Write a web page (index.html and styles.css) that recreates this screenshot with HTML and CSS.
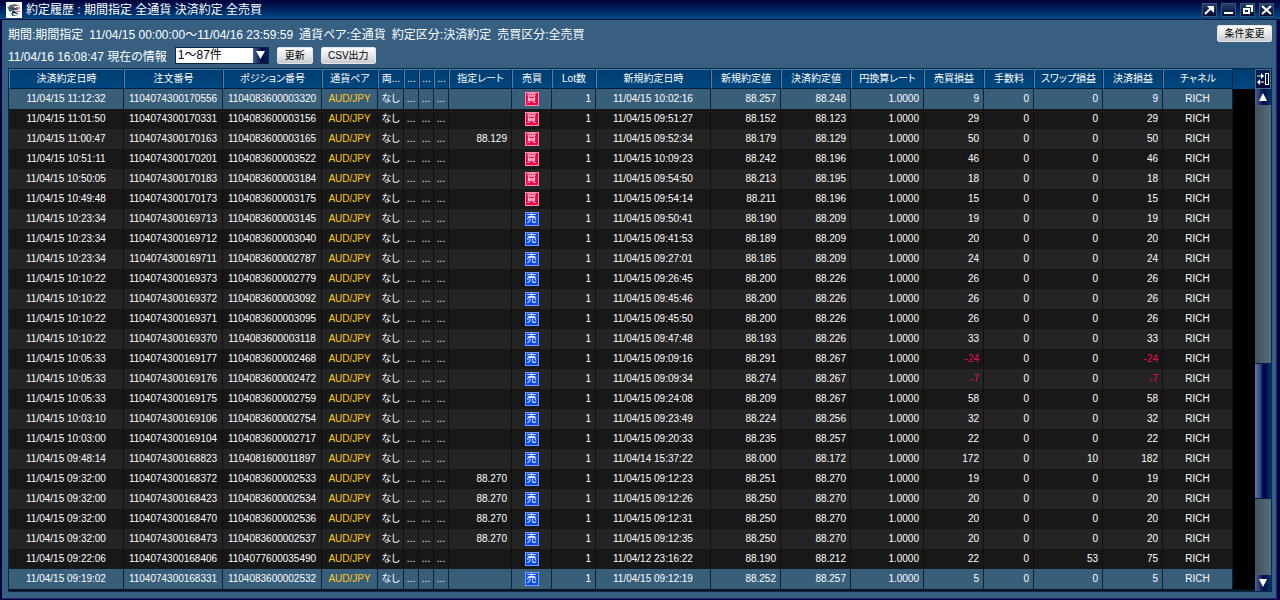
FILE: index.html
```html
<!DOCTYPE html>
<html lang="ja">
<head>
    <meta charset="UTF-8">
    <meta name="viewport" content="width=device-width, initial-scale=1.0">
    <title>約定履歴</title>
    <link rel="stylesheet" href="styles.css">
</head>
<body>
    <div class="window">
        <header class="title-bar">
            <svg class="logo" viewBox="0 0 16 16" aria-hidden="true">
                <rect width="16" height="16" fill="#fff"/>
                <path d="M1 6 L4 3 L9 2 L14 4 L9 4 L6 6 L3 7 Z" fill="#5c6a78"/>
                <path d="M2 7 L7 5 L10 6 L14 7 L10 8 L7 8 L4 10 Z" fill="#3a4658"/>
                <path d="M7 8 L9 9 L13 13 L8 11 L6 14 L6 10 Z" fill="#26303e"/>
                <path d="M5 10 L8 13 L12 14 L6 14 Z" fill="#2c7b91"/>
                <path d="M10 5.5 L14 6 M10 9 L14 10" stroke="#d5455a" fill="none"/>
                <path d="M3 8 L6 7" stroke="#2c9b91" fill="none"/>
            </svg>
            <h1>約定履歴 : 期間指定 全通貨 決済約定 全売買</h1>
            <div class="window-buttons">
                <button type="button" class="window-btn" aria-label="切り離し">
                    <svg viewBox="0 0 13 12"><path d="M2 10 L8 4" stroke="#fff" stroke-width="2" fill="none"/><path d="M4 2 H11 V9 Z" fill="#fff"/></svg>
                </button>
                <button type="button" class="window-btn" aria-label="最小化">
                    <svg viewBox="0 0 13 12"><path d="M2 9 H11" stroke="#fff" stroke-width="2"/></svg>
                </button>
                <button type="button" class="window-btn" aria-label="元に戻す">
                    <svg viewBox="0 0 13 12"><path d="M5 2 H11 V8" stroke="#fff" stroke-width="2" fill="none"/><rect x="3" y="5" width="5" height="4" stroke="#fff" stroke-width="2" fill="none"/></svg>
                </button>
                <button type="button" class="window-btn" aria-label="閉じる">
                    <svg viewBox="0 0 13 12"><path d="M2 2 L11 10 M11 2 L2 10" stroke="#fff" stroke-width="2"/></svg>
                </button>
            </div>
        </header>

        <main class="content">
            <div class="conditions">
                <span>期間:期間指定</span>
                <span>11/04/15 00:00:00～11/04/16 23:59:59</span>
                <span>通貨ペア:全通貨</span>
                <span>約定区分:決済約定</span>
                <span>売買区分:全売買</span>
                <button type="button" class="btn change-btn">条件変更</button>
            </div>
            <div class="toolbar">
                <label for="pageRange">11/04/16 16:08:47 現在の情報</label>
                <div class="select-box">
                    <select id="pageRange">
                        <option>1～87件</option>
                    </select>
                    <span class="select-arrow"><svg viewBox="0 0 9 8"><path d="M0 0 H9 L4.5 8 Z" fill="#fff"/></svg></span>
                </div>
                <button type="button" class="btn">更新</button>
                <button type="button" class="btn csv-btn">CSV出力</button>
            </div>

            <div class="history">
                <div class="table-area">
                    <table>
                        <colgroup>
                            <col class="w-date"><col class="w-id"><col class="w-id"><col class="w-pair"><col class="w-both">
                            <col class="w-dots"><col class="w-dots"><col class="w-dots"><col class="w-limit"><col class="w-side">
                            <col class="w-lot"><col class="w-date"><col class="w-price"><col class="w-price"><col class="w-yen">
                            <col class="w-profit"><col class="w-fee"><col class="w-swap"><col class="w-profit"><col class="w-price"><col>
                        </colgroup>
                        <thead>
                            <tr>
                                <th>決済約定日時</th>
                                <th>注文番号</th>
                                <th>ポジション番号</th>
                                <th>通貨ペア</th>
                                <th class="tight">両...</th>
                                <th class="tight">...</th>
                                <th class="tight">...</th>
                                <th class="tight">...</th>
                                <th>指定レート</th>
                                <th>売買</th>
                                <th>Lot数</th>
                                <th>新規約定日時</th>
                                <th>新規約定値</th>
                                <th>決済約定値</th>
                                <th>円換算レート</th>
                                <th>売買損益</th>
                                <th>手数料</th>
                                <th>スワップ損益</th>
                                <th>決済損益</th>
                                <th>チャネル</th>
                                <td class="rest"></td>
                            </tr>
                        </thead>
                        <tbody id="historyRows"></tbody>
                    </table>
                </div>
                <div class="side">
                    <button type="button" class="columns-btn" aria-label="列の設定">
                        <svg viewBox="0 0 14 18"><path d="M1 6 H6 M3 12 H8" stroke="#fff"/><path d="M5 3 L8 6 L5 9 Z M4 9 L1 12 L4 15 Z" fill="#fff"/><rect x="9.5" y="3.5" width="3" height="11" stroke="#fff" fill="none"/></svg>
                    </button>
                    <div class="scrollbar">
                        <button type="button" class="scroll-btn" aria-label="上へ"><svg viewBox="0 0 8 8"><path d="M4 0 L8 8 H0 Z" fill="#fff"/></svg></button>
                        <div class="track">
                            <div class="track-before"></div>
                            <div class="thumb"></div>
                            <div class="track-after"></div>
                        </div>
                        <button type="button" class="scroll-btn" aria-label="下へ"><svg viewBox="0 0 8 8"><path d="M0 0 H8 L4 8 Z" fill="#fff"/></svg></button>
                    </div>
                </div>
            </div>
        </main>
    </div>
    <script src="script.js"></script>
</body>
</html>
```
FILE: styles.css
```css
* {
    box-sizing: border-box;
}
body {
    margin: 0;
    background-color: #00003c;
    color: #fff;
    font-family: "Liberation Sans", "Noto Sans CJK JP", sans-serif;
    font-size: 12px;
}
button, select {
    font-family: inherit;
    margin: 0;
}
svg {
    display: block;
}
.window {
    display: flex;
    flex-direction: column;
    min-height: 100vh;
}
.title-bar {
    display: flex;
    align-items: center;
    gap: 4px;
    height: 20px;
    padding: 0 6px;
    background: linear-gradient(#000038, #00205c 45%, #004a84);
    border-bottom: 1px solid #00123c;
}
.title-bar h1 {
    flex: 1;
    margin: 0;
    font-size: 12px;
    font-weight: normal;
    line-height: 18px;
    font-feature-settings: "palt";
}
.logo {
    width: 16px;
    height: 16px;
}
.window-buttons {
    display: flex;
    gap: 4px;
}
.window-btn {
    width: 15px;
    height: 14px;
    padding: 0;
    border: 1px solid #3c5274;
    background: linear-gradient(#26406c, #000a30);
}
.content {
    display: flex;
    flex: 1;
    flex-direction: column;
    margin: 0 3px 1px 2px;
    padding: 4px 4px 6px 6px;
    border: solid #24247a;
    border-width: 0 1px 1px 0;
    background-color: #365f82;
}
.conditions {
    display: flex;
    align-items: center;
    gap: 6px;
    height: 19px;
    font-feature-settings: "palt";
}
.toolbar {
    display: flex;
    align-items: center;
    gap: 8px;
    height: 24px;
    margin-bottom: 1px;
    font-feature-settings: "palt";
}
.btn {
    min-width: 36px;
    height: 17px;
    padding: 0 6px;
    border: 1px solid #e4e6ea;
    border-radius: 2px;
    background: linear-gradient(#fff, #e8e8e8 50%, #c8ccd0);
    color: #000;
    font-size: 10px;
    line-height: 15px;
    white-space: nowrap;
}
.csv-btn, .change-btn {
    min-width: 55px;
}
.change-btn {
    margin-left: auto;
}
.select-box {
    position: relative;
    width: 94px;
    height: 17px;
}
.select-box select {
    display: block;
    width: 100%;
    height: 17px;
    padding: 0 18px 0 2px;
    border: 1px solid #0a2444;
    border-radius: 0;
    background-color: #fff;
    color: #000;
    font-size: 12px;
    line-height: 15px;
    appearance: none;
}
.select-arrow {
    position: absolute;
    top: 1px;
    right: 1px;
    display: flex;
    align-items: center;
    justify-content: center;
    width: 15px;
    height: 15px;
    background: linear-gradient(90deg, #4a6090, #001048 60%, #00205c);
    pointer-events: none;
}
.select-arrow svg {
    width: 9px;
    height: 8px;
}
.history {
    display: flex;
    flex: 1;
    border: 1px solid #062a4c;
}
.table-area {
    flex: 1;
    min-width: 0;
    background-color: #0c1418;
}
table {
    width: 100%;
    border-collapse: separate;
    border-spacing: 0;
    table-layout: fixed;
}
.w-date { width: 115px; }
.w-id { width: 99px; }
.w-pair { width: 56px; }
.w-both { width: 26px; }
.w-dots { width: 15px; }
.w-limit { width: 63px; }
.w-side { width: 40px; }
.w-lot { width: 44px; }
.w-price { width: 70px; }
.w-yen { width: 73px; }
.w-profit { width: 60px; }
.w-fee { width: 50px; }
.w-swap { width: 69px; }
th {
    height: 20px;
    padding: 0;
    border: 1px solid #4884ac;
    border-right-color: #00284c;
    border-bottom-color: #002040;
    background: linear-gradient(#003c70, #004880);
    font-size: 10px;
    font-weight: normal;
    font-feature-settings: "palt";
    line-height: 18px;
    text-align: center;
    white-space: nowrap;
}
td {
    height: 20px;
    padding: 0 4px;
    border-right: 1px solid #101010;
    font-size: 10px;
    line-height: 20px;
    text-align: center;
    white-space: nowrap;
}
tbody tr {
    background-color: #242424;
}
tbody tr:nth-child(even) {
    background-color: #181818;
}
tbody tr.selected {
    background-color: #385e7a;
}
tbody tr.selected td {
    border-right-color: #0c2438;
}
.num {
    text-align: right;
}
.pair {
    color: #fcc820;
}
.both {
    padding: 0;
    font-feature-settings: "palt";
}
.dots {
    padding: 0;
}
.minus {
    color: #e81048;
}
td.rest, tbody tr.selected td.rest {
    padding: 0;
    border: 0;
    background-color: #000;
}
thead td.rest {
    background: linear-gradient(#003c70, #004880);
}
.badge {
    display: block;
    width: 14px;
    height: 14px;
    margin: 0 auto;
    border: 1px solid #ff90a8;
    background-color: #f00048;
    font-size: 10px;
    line-height: 12px;
    text-align: center;
}
.badge.sell {
    border-color: #78a0ff;
    background-color: #0848e8;
}
.side {
    display: flex;
    flex-direction: column;
    width: 16px;
}
.columns-btn {
    height: 20px;
    padding: 0;
    border: 1px solid #4a6c90;
    background: linear-gradient(#002058, #000a34);
}
.scrollbar {
    display: flex;
    flex: 1;
    flex-direction: column;
}
.scroll-btn {
    display: flex;
    align-items: center;
    justify-content: center;
    height: 16px;
    padding: 0;
    border: 0;
    background: linear-gradient(90deg, #4a6494, #000c48 55%, #003466);
}
.scroll-btn svg {
    width: 8px;
    height: 8px;
}
.track {
    display: flex;
    flex: 1;
    flex-direction: column;
    background: linear-gradient(90deg, #40525f, #566a78);
}
.track-before {
    flex: 260;
}
.thumb {
    flex: 135;
    border: solid #001c44;
    border-width: 1px 0;
    background: linear-gradient(90deg, #5c7cac, #2c4880 35%, #000848 50%, #000848 65%, #00386c);
}
.track-after {
    flex: 76;
}
```
FILE: script.js
```js
// close time, order no, position no, limit rate, side, open time, open price, close price, trade P/L, swap, total P/L
const rows = [
    ['11/04/15 11:12:32', '1104074300170556', '1104083600003320', '', '買', '11/04/15 10:02:16', '88.257', '88.248', 9, 0, 9],
    ['11/04/15 11:01:50', '1104074300170331', '1104083600003156', '', '買', '11/04/15 09:51:27', '88.152', '88.123', 29, 0, 29],
    ['11/04/15 11:00:47', '1104074300170163', '1104083600003165', '88.129', '買', '11/04/15 09:52:34', '88.179', '88.129', 50, 0, 50],
    ['11/04/15 10:51:11', '1104074300170201', '1104083600003522', '', '買', '11/04/15 10:09:23', '88.242', '88.196', 46, 0, 46],
    ['11/04/15 10:50:05', '1104074300170183', '1104083600003184', '', '買', '11/04/15 09:54:50', '88.213', '88.195', 18, 0, 18],
    ['11/04/15 10:49:48', '1104074300170173', '1104083600003175', '', '買', '11/04/15 09:54:14', '88.211', '88.196', 15, 0, 15],
    ['11/04/15 10:23:34', '1104074300169713', '1104083600003145', '', '売', '11/04/15 09:50:41', '88.190', '88.209', 19, 0, 19],
    ['11/04/15 10:23:34', '1104074300169712', '1104083600003040', '', '売', '11/04/15 09:41:53', '88.189', '88.209', 20, 0, 20],
    ['11/04/15 10:23:34', '1104074300169711', '1104083600002787', '', '売', '11/04/15 09:27:01', '88.185', '88.209', 24, 0, 24],
    ['11/04/15 10:10:22', '1104074300169373', '1104083600002779', '', '売', '11/04/15 09:26:45', '88.200', '88.226', 26, 0, 26],
    ['11/04/15 10:10:22', '1104074300169372', '1104083600003092', '', '売', '11/04/15 09:45:46', '88.200', '88.226', 26, 0, 26],
    ['11/04/15 10:10:22', '1104074300169371', '1104083600003095', '', '売', '11/04/15 09:45:50', '88.200', '88.226', 26, 0, 26],
    ['11/04/15 10:10:22', '1104074300169370', '1104083600003118', '', '売', '11/04/15 09:47:48', '88.193', '88.226', 33, 0, 33],
    ['11/04/15 10:05:33', '1104074300169177', '1104083600002468', '', '売', '11/04/15 09:09:16', '88.291', '88.267', -24, 0, -24],
    ['11/04/15 10:05:33', '1104074300169176', '1104083600002472', '', '売', '11/04/15 09:09:34', '88.274', '88.267', -7, 0, -7],
    ['11/04/15 10:05:33', '1104074300169175', '1104083600002759', '', '売', '11/04/15 09:24:08', '88.209', '88.267', 58, 0, 58],
    ['11/04/15 10:03:10', '1104074300169106', '1104083600002754', '', '売', '11/04/15 09:23:49', '88.224', '88.256', 32, 0, 32],
    ['11/04/15 10:03:00', '1104074300169104', '1104083600002717', '', '売', '11/04/15 09:20:33', '88.235', '88.257', 22, 0, 22],
    ['11/04/15 09:48:14', '1104074300168823', '1104081600011897', '', '売', '11/04/14 15:37:22', '88.000', '88.172', 172, 10, 182],
    ['11/04/15 09:32:00', '1104074300168372', '1104083600002533', '88.270', '売', '11/04/15 09:12:23', '88.251', '88.270', 19, 0, 19],
    ['11/04/15 09:32:00', '1104074300168423', '1104083600002534', '88.270', '売', '11/04/15 09:12:26', '88.250', '88.270', 20, 0, 20],
    ['11/04/15 09:32:00', '1104074300168470', '1104083600002536', '88.270', '売', '11/04/15 09:12:31', '88.250', '88.270', 20, 0, 20],
    ['11/04/15 09:32:00', '1104074300168473', '1104083600002537', '88.270', '売', '11/04/15 09:12:35', '88.250', '88.270', 20, 0, 20],
    ['11/04/15 09:22:06', '1104074300168406', '1104077600035490', '', '売', '11/04/12 23:16:22', '88.190', '88.212', 22, 53, 75],
    ['11/04/15 09:19:02', '1104074300168331', '1104083600002532', '', '売', '11/04/15 09:12:19', '88.252', '88.257', 5, 0, 5]
];

const selected = [0, 24];

function profitCell(value) {
    return `<td class="num${value < 0 ? ' minus' : ''}">${value}</td>`;
}

let html = '';
rows.forEach((row, index) => {
    const [closed, order, position, limit, side, opened, openPrice, closePrice, profit, swap, total] = row;
    html += `
        <tr${selected.includes(index) ? ' class="selected"' : ''}>
            <td>${closed}</td>
            <td>${order}</td>
            <td>${position}</td>
            <td class="pair">AUD/JPY</td>
            <td class="both">なし</td>
            <td class="dots">...</td>
            <td class="dots">...</td>
            <td class="dots">...</td>
            <td class="num">${limit}</td>
            <td><span class="badge${side === '売' ? ' sell' : ''}">${side}</span></td>
            <td class="num">1</td>
            <td>${opened}</td>
            <td class="num">${openPrice}</td>
            <td class="num">${closePrice}</td>
            <td class="num">1.0000</td>
            ${profitCell(profit)}
            <td class="num">0</td>
            <td class="num">${swap}</td>
            ${profitCell(total)}
            <td>RICH</td>
            <td class="rest"></td>
        </tr>`;
});
document.getElementById('historyRows').innerHTML = html;
```
